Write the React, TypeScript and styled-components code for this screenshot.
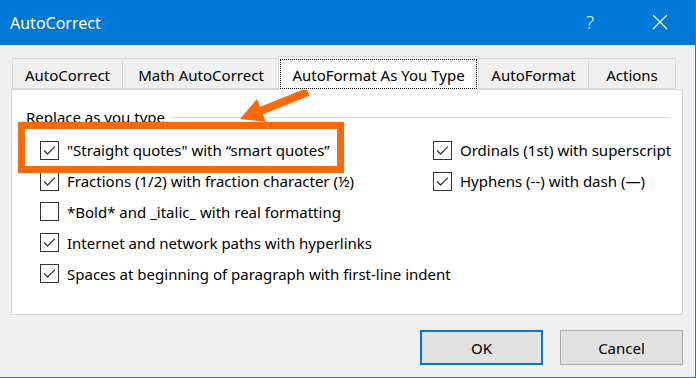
import React from 'react';
import styled, { createGlobalStyle } from "styled-components";

const GlobalStyle = createGlobalStyle`
  body {
    margin: 0;
    background: #F0F0F0;
  }
  * {
    box-sizing: border-box;
  }
`

type OptionType = {
    label: string
    checked: boolean
}

const leftOptions: OptionType[] = [
    {label: '"Straight quotes" with \u201Csmart quotes\u201D', checked: true},
    {label: 'Fractions (1/2) with fraction character (\u00BD)', checked: true},
    {label: '*Bold* and _italic_ with real formatting', checked: false},
    {label: 'Internet and network paths with hyperlinks', checked: true},
    {label: 'Spaces at beginning of paragraph with first-line indent', checked: true},
]

const rightOptions: OptionType[] = [
    {label: 'Ordinals (1st) with superscript', checked: true},
    {label: 'Hyphens (--) with dash (\u2014)', checked: true},
]

const tabs = [
    {title: 'AutoCorrect', width: 111},
    {title: 'Math AutoCorrect', width: 158},
    {title: 'AutoFormat As You Type', width: 201, active: true},
    {title: 'AutoFormat', width: 111},
    {title: 'Actions', width: 88},
]

const CheckItem = (props: OptionType) => {
    return (
        <Row>
            <Box>
                {props.checked && (
                    <svg width="17" height="17" viewBox="0 0 17 17">
                        <path d="M3 8.5 L6.6 12 L14 4.6" fill="none" stroke="#3a3a3a" strokeWidth="1.3"/>
                    </svg>
                )}
            </Box>
            <Label>{props.label}</Label>
        </Row>
    )
}

export default function App() {
    return (
        <>
            <GlobalStyle/>
            <Window>
                <TitleBar>
                    <Title>AutoCorrect</Title>
                    <Help>?</Help>
                    <Close>
                        <svg width="16" height="16" viewBox="0 0 16 16">
                            <path d="M1 1 L15 15 M15 1 L1 15" stroke="#fff" strokeWidth="1.2"/>
                        </svg>
                    </Close>
                </TitleBar>
                <Body>
                    <TabStrip>
                        {tabs.map(t => (
                            <Tab key={t.title} $width={t.width} $active={!!t.active}>
                                {t.active ? <Focus>{t.title}</Focus> : t.title}
                            </Tab>
                        ))}
                    </TabStrip>
                    <Panel>
                        <GroupHeader>
                            <GroupTitle>Replace as you type</GroupTitle>
                            <GroupLine/>
                        </GroupHeader>
                        <Columns>
                            <Column>
                                {leftOptions.map(o => <CheckItem key={o.label} {...o}/>)}
                            </Column>
                            <Column>
                                {rightOptions.map(o => <CheckItem key={o.label} {...o}/>)}
                            </Column>
                        </Columns>
                        <Highlight/>
                        <Arrow width="80" height="50" viewBox="0 0 80 50">
                            <path d="M70 4 L20 24" stroke="#FA6A0A" strokeWidth="8" fill="none"/>
                            <polygon points="2,31 19,11 28,34" fill="#FA6A0A"/>
                        </Arrow>
                    </Panel>
                    <Buttons>
                        <Button $primary>OK</Button>
                        <Button>Cancel</Button>
                    </Buttons>
                </Body>
            </Window>
        </>
    )
}

const Window = styled.div`
  width: 696px;
  height: 378px;
  background: #F0F0F0;
  border-right: 1px solid #2B7BC6;
  border-bottom: 1px solid #2B7BC6;
  display: flex;
  flex-direction: column;
  font-family: "Noto Sans", "Open Sans", sans-serif;
  color: #000;
`
const TitleBar = styled.div`
  height: 45px;
  background: #0078D7;
  color: #FFF;
  display: flex;
  align-items: center;
  padding-left: 10px;
`
const Title = styled.div`
  font-size: 16px;
  flex: 1;
`
const Help = styled.div`
  font-size: 19px;
  font-weight: 300;
  width: 66px;
  margin-top: -2px;
  color: #E6F0FA;
`
const Close = styled.div`
  width: 43px;
  display: flex;
  align-items: center;
  margin-top: -1px;
`
const Body = styled.div`
  padding: 13px 12px 0 11px;
  display: flex;
  flex-direction: column;
`
const TabStrip = styled.div`
  display: flex;
  align-items: flex-end;
  padding-left: 1px;
  height: 31px;
  position: relative;
  z-index: 1;
`
const Tab = styled.div<{ $width: number, $active: boolean }>`
  width: ${p => p.$width}px;
  height: ${p => p.$active ? 34 : 31}px;
  margin-bottom: ${p => p.$active ? -1 : 0}px;
  margin-left: ${p => p.$active ? -1 : 0}px;
  margin-right: -1px;
  background: ${p => p.$active ? '#FFF' : '#F0F0F0'};
  border: 1px solid #D9D9D9;
  border-bottom: ${p => p.$active ? 'none' : '1px solid #D9D9D9'};
  display: flex;
  align-items: center;
  justify-content: center;
  font-size: 15px;
  padding: ${p => p.$active ? '2px 1px 1px' : '2px 0 0'};
`
const Focus = styled.div`
  width: 100%;
  height: 100%;
  border: 1px dotted #000;
  display: flex;
  align-items: center;
  justify-content: center;
  padding-top: 1px;
`
const Panel = styled.div`
  position: relative;
  height: 226px;
  background: #FFF;
  border: 1px solid #D9D9D9;
  padding: 16px 12px 0 14px;
`
const GroupHeader = styled.div`
  display: flex;
  align-items: center;
  height: 22px;
`
const GroupTitle = styled.div`
  font-size: 15px;
  padding-right: 6px;
`
const GroupLine = styled.div`
  flex: 1;
  height: 1px;
  background: #DCDCDC;
  margin-top: 1px;
`
const Columns = styled.div`
  display: grid;
  grid-template-columns: 393px auto;
  padding-left: 14px;
  margin-top: 7px;
`
const Column = styled.div`
  display: flex;
  flex-direction: column;
`
const Row = styled.div`
  display: flex;
  align-items: center;
  height: 30.8px;
`
const Box = styled.div`
  width: 19px;
  height: 19px;
  border: 1px solid #333;
  background: #FFF;
  display: flex;
  align-items: center;
  justify-content: center;
  flex-shrink: 0;
`
const Label = styled.div`
  font-size: 15px;
  margin-left: 8px;
  white-space: nowrap;
`
const Highlight = styled.div`
  position: absolute;
  left: 6px;
  top: 32px;
  width: 326px;
  height: 51px;
  border: 7px solid #FA6A0A;
  pointer-events: none;
`
const Arrow = styled.svg`
  position: absolute;
  left: 226px;
  top: -2px;
`
const Buttons = styled.div`
  display: flex;
  justify-content: flex-end;
  gap: 17px;
  margin-top: 15px;
`
const Button = styled.button<{ $primary?: boolean }>`
  width: 123px;
  height: 35px;
  background: #E1E1E1;
  border: ${p => p.$primary ? '2px solid #0078D7' : '1px solid #ADADAD'};
  font-family: "Noto Sans", "Open Sans", sans-serif;
  font-size: 15px;
  color: #000;
  padding: 0;
`
